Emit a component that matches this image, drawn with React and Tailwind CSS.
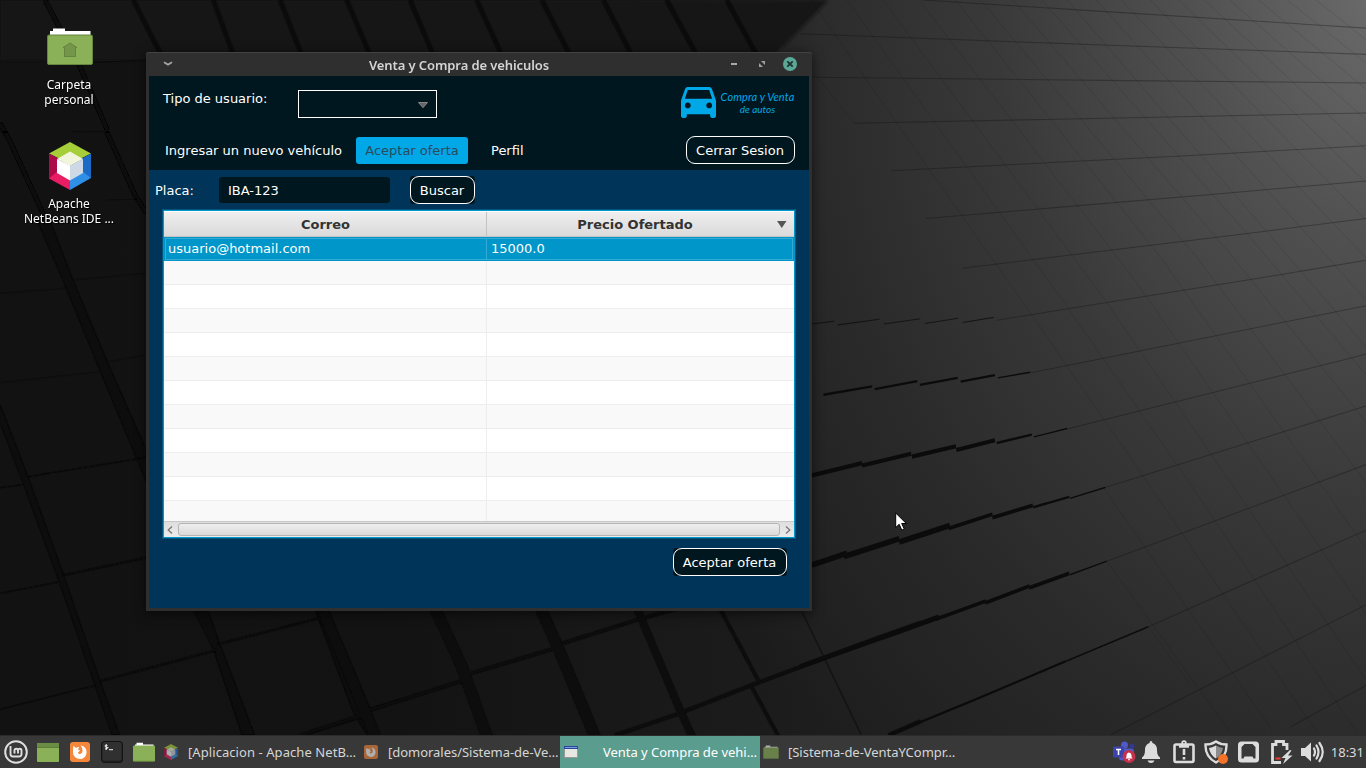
const UI = "font-['Noto_Sans','Open_Sans',sans-serif]";

function Wallpaper() {
  return (
    <svg className="absolute inset-0 h-full w-full" viewBox="0 0 1366 768" preserveAspectRatio="none">
      <defs>
        <radialGradient id="light" gradientUnits="userSpaceOnUse" cx="0" cy="0" r="1" gradientTransform="translate(1400 -30) scale(820 1080)">
          <stop offset="0" stopColor="#6f6f6f" />
          <stop offset=".25" stopColor="#515151" />
          <stop offset=".5" stopColor="#393939" />
          <stop offset=".75" stopColor="#292929" />
          <stop offset="1" stopColor="#1d1d1d" />
        </radialGradient>
        <linearGradient id="shade" x1="0" x2="1" y1="0" y2="0">
          <stop offset="0" stopColor="#121212" />
          <stop offset=".5" stopColor="#131313" />
          <stop offset="1" stopColor="#131313" stopOpacity="0" />
        </linearGradient>
        <filter id="soft"><feGaussianBlur stdDeviation="1.6" /></filter>
      </defs>
      <rect width="1366" height="768" fill="url(#light)" />
      <rect width="820" height="768" fill="url(#shade)" />
      <path d="M0 0H829L770 60H0Z" fill="#151515" filter="url(#soft)" />

      <g transform="scale(.33333)" fill="none" stroke="#070707" filter="url(#soft)">
        <path strokeWidth="15" d="M135 0L240 200L322 390M320 395L405 585L440 640M0 370L28 420L120 620L150 690" />
        <path strokeWidth="15" d="M400 0L460 120L485 165M640 0L700 165M840 0L905 165M1040 0L1110 165M1230 0L1300 165M1430 0L1505 165M1625 0L1710 165M1810 0L1895 165M2000 0L2090 165M2180 0L2270 165" opacity=".5" />
        <path strokeWidth="3" opacity=".4" d="M240 190L440 180M325 395L215 395M0 395H25M320 600L410 598" />
      </g>

      <g transform="translate(0 220) scale(.33333)" filter="url(#soft)">
        <g fill="#070707">
          <path d="M110 0H150L220 180L325 430L440 690V790L300 455L200 210Z" />
          <path d="M0 550L85 770L190 1060L300 1380L360 1545H335L285 1400L178 1090L72 800L0 610Z" />
          <path d="M580 1172H625L660 1270L765 1545H725L640 1290Z" />
          <path d="M945 1172H985L1110 1465L1137 1545H1100L1060 1480Z" />
        </g>
        <g fill="none" stroke="#080808" strokeWidth="6">
          <path d="M190 1065L440 1013M300 1383L650 1290M655 1272L980 1188M910 1545L1095 1488M1110 1468L1200 1440" />
          <path strokeWidth="3" d="M85 770L440 712M0 803L75 793M0 1120L180 1085M0 1468L290 1395" />
          <path strokeWidth="3" opacity=".4" d="M0 220L200 205M0 488L300 455M215 180L440 160M325 425L440 405" />
        </g>
      </g>

      <g transform="translate(200 600) scale(.4592 .33333)" fill="none" stroke="#080808" filter="url(#soft)">
        <path strokeWidth="26" d="M268 33L310 170L382 410M510 20L570 200L625 410M740 20L785 160L860 410" />
        <path strokeWidth="17" d="M950 20L1045 330L1072 410" />
        <path strokeWidth="8" d="M1130 20L1215 240M1201 260L1260 410" />
        <path strokeWidth="11" d="M370 330L575 241M220 405L355 345M585 222L770 146M790 130L950 60L1040 25M905 405L1040 342L1200 256L1480 112L1570 68M1500 405L1570 363" />
        <path strokeWidth="1.5" d="M1310 33L1440 405" />
      </g>

      <g transform="translate(800 0) scale(.361 .4688)" fill="none" stroke="#0b0b0b">
        <g strokeWidth="2.2" opacity=".32">
          <path d="M340 0L750 20L1568 60M0 72L840 96L1568 116M33 165L905 172L1568 177M150 263L985 250L1568 241M253 364L1070 332L1568 311M348 466L1155 414L1568 386M450 572L1240 498L1568 466M545 683L1330 586L1568 555M640 795L1420 675L1568 652M740 915L1510 767L1568 755M845 1040L1568 866M850 1197L1568 991M965 1337L1568 1131M860 1568L1568 1290M1360 1550L1568 1462" />
        </g>
        <g strokeWidth="2" opacity=".12">
          <path d="M33 150L150 263M30 0L270 265L640 670L950 1015L1430 1560M130 0L745 660L1070 1020L1540 1560M230 0L845 640L1568 1450M330 0L930 600L1568 1310M430 0L1000 550L1568 1170M500 0L1100 550L1568 1030M590 0L1190 540L1568 900M670 0L1240 500L1568 800M740 0L1568 740M820 0L1568 640M890 0L1568 550M970 0L1568 470M1050 0L1568 390M1120 0L1568 320M1190 0L1568 255M1270 0L1568 190M1350 0L1568 135M1430 0L1568 85M840 1040L1310 1560M850 1197L1190 1560M965 1337L1080 1460M10 1310L170 1568" />
        </g>
        <path strokeWidth="2.2" opacity=".7" d="M33 691L95 685M105 693L220 681M232 691L333 680M346 690L438 679M450 688L537 677" />
        <path strokeWidth="5" d="M65 842L200 824M207 830L325 813M332 821L437 806M445 814L540 800" />
        <path strokeWidth="3" d="M548 806L638 794M648 932L740 914M748 1063L845 1040M748 1226L850 1197" />
        <path strokeWidth="9" d="M33 1014L172 988M172 993L308 968M310 974L432 952M433 960L540 939" />
        <path strokeWidth="5" d="M545 945L642 927M646 1082L746 1060" />
        <path strokeWidth="12" d="M33 1205L130 1180M122 1187L275 1149M275 1156L415 1121" />
        <path strokeWidth="8" d="M412 1127L533 1097M533 1104L645 1078M376 1321L515 1282M513 1286L636 1250M635 1254L746 1223" />
        <path strokeWidth="11" d="M0 1422L235 1357M228 1360L385 1316" />
        <path strokeWidth="5" d="M245 1568L480 1494L615 1450L735 1411" />
        <path strokeWidth="3" d="M735 1411L965 1337" />
      </g>
    </svg>
  );
}

function NetBeansIcon({ className }) {
  return (
    <svg className={className} viewBox="0 0 42 48">
      <path d="M21 0L42 11.500L21 22L0 11.500Z" fill="#a6ce39" />
      <path d="M0 11.500L12 18V31L0 37Z" fill="#ad0a49" />
      <path d="M42 11.500L30 18V31L42 36Z" fill="#1a6ac6" />
      <path d="M0 36.500L9 29L21 38V48Z" fill="#e91d63" />
      <path d="M42 36L33 29L21 38V48Z" fill="#2f8fe6" />
      <path d="M21 9.500L34 17L21 24L8 17Z" fill="#f0f5dc" />
      <path d="M8 17L21 23.500V38.500L8 31Z" fill="#fff" />
      <path d="M34 17L21 23.500V38.500L34 31Z" fill="#cdd9e5" />
    </svg>
  );
}

function FolderIcon({ className }) {
  return (
    <svg className={className} viewBox="0 0 22 20">
      <path d="M2 5V2.500H3.500V.8H10V2.500H20.500V5Z" fill="#fff" />
      <rect y="3.500" width="22" height="16" rx="1" fill="#8bb158" />
      <path d="M.5 19.300H21.500" stroke="#62803a" strokeWidth=".8" />
    </svg>
  );
}

function FirefoxIcon({ className }) {
  return (
    <svg className={className} viewBox="0 0 20 20">
      <rect width="20" height="20" rx="3" fill="#f5863a" />
      <path d="M3.500 3.800L6 6C7 5.200 8 5 9.200 5L8 7.500L10 8.500C9.500 10 8 9.500 8 11C9 13 12.500 12 12.500 9C12.500 7 12 5 10.500 3.500C14.500 4 17 7 16.500 11C16 15 13 17 10 17C6 17 3 14 3 10.500C3 8 3 6 3.500 3.800Z" fill="#fff" />
    </svg>
  );
}

function DesktopIcon({ children, lines }) {
  return (
    <div className={`flex flex-col items-center text-center text-[12px] leading-[15px] text-white [text-shadow:1px_1px_1px_#000] ${UI}`}>
      {children}
      {lines.map((l) => <span key={l} className="whitespace-nowrap">{l}</span>)}
    </div>
  );
}

function TitleBar() {
  return (
    <div className="flex h-6 shrink-0 items-center rounded-t-[3px] border-t border-[#434343] bg-[#2f2f2f] pb-px pl-[17px] pr-[15px]">
      <svg className="h-[6px] w-[10px]" viewBox="0 0 10 6"><path d="M1 1.200Q3 2.800 5 3.600Q7 2.800 9 1.200" fill="none" stroke="#a8a8a8" strokeWidth="1.700" /></svg>
      <div className={`flex-1 pl-[18px] pt-[2px] text-center text-[13px] font-semibold leading-5 text-[#d4d4d4] ${UI}`}>
        <span className="tracking-[-0.1px]">Venta y Compra de vehiculos</span>
      </div>
      <div className="flex items-center gap-[18px]">
        <svg className="-ml-px h-[14px] w-[14px]" viewBox="0 0 14 14"><path d="M5 7H11" stroke="#a8a8a8" strokeWidth="2" /></svg>
        <svg className="h-[14px] w-[8px]" viewBox="0 0 8 14"><path d="M3 4H7V8ZM1 6V10H5Z" fill="#a0a0a0" /></svg>
        <svg className="-ml-px h-[14px] w-[14px]" viewBox="0 0 14 14">
          <circle cx="7" cy="7" r="7" fill="#5aa897" />
          <path d="M4.300 4.300L9.700 9.700M9.700 4.300L4.300 9.700" stroke="#22332f" strokeWidth="1.900" />
        </svg>
      </div>
    </div>
  );
}

function Logo() {
  return (
    <div className="flex items-center gap-[5px] text-[#00a8e8]">
      <svg className="h-[31px] w-[35px]" viewBox="3 5 18 16" preserveAspectRatio="none" fill="currentColor">
        <path d="M18.920 6.010C18.720 5.420 18.160 5 17.500 5h-11c-.66 0-1.210.42-1.420 1.010L3 12v8c0 .55.45 1 1 1h1c.55 0 1-.45 1-1v-1h12v1c0 .55.45 1 1 1h1c.55 0 1-.45 1-1v-8l-2.080-5.990zM6.500 16c-.83 0-1.500-.67-1.500-1.500S5.670 13 6.500 13s1.500.67 1.500 1.500S7.330 16 6.500 16zm11 0c-.83 0-1.500-.67-1.500-1.500s.67-1.500 1.500-1.500 1.500.67 1.500 1.500-.67 1.500-1.500 1.500zM5 11l1.500-4.500h11L19 11H5z" />
      </svg>
      <div className="w-[74px] whitespace-nowrap text-center font-['Lato',sans-serif] text-[11px] italic leading-[13px]">
        <div className="-ml-px tracking-[0.12px]">Compra y Venta</div>
        <div className="-ml-px text-[10px]">de autos</div>
      </div>
    </div>
  );
}

function OutlineButton({ children, className }) {
  return (
    <div className={`rounded-[3px] bg-[#00171f] ${className}`}>
      <button className="flex h-7 w-full items-center justify-center rounded-[9px] border border-white pr-px pt-px text-white">{children}</button>
    </div>
  );
}

const EMPTY_ROWS = [1, 2, 3, 4, 5, 6, 7, 8, 9, 10];

function OffersTable() {
  return (
    <div className="ml-[14px] flex h-[328px] w-[632px] flex-col border border-[#0096c9] bg-white shadow-[0_0_0_1px_rgba(3,158,211,.3)]">
      <div className="flex h-[26px] shrink-0 border-b border-[#c4c4c4] bg-linear-to-b from-[#f0f0f0] to-[#dadada] pt-px font-bold text-[#333] shadow-[inset_0_1px_0_#fff]">
        <div className="flex w-[323px] items-center justify-center border-r border-[#c3c3c3] pl-px pt-px">Correo</div>
        <div className="flex flex-1 items-center pl-px pr-[8px] pt-px">
          <span className="flex-1 pl-[5px] text-center">Precio Ofertado</span>
          <svg className="-mr-px h-[7px] w-[10px]" viewBox="0 0 10 7"><path d="M0 0H9.500L4.750 7Z" fill="#555" /></svg>
        </div>
      </div>
      <div className="flex h-6 shrink-0 bg-[#0096c9] p-px text-white">
        <div className="flex flex-1 border border-[#33abd4]">
          <div className="flex w-[321px] items-center border-r border-[#33abd4] pb-px pl-[2px]">usuario@hotmail.com</div>
          <div className="flex flex-1 items-center pb-px pl-[4px]">15000.0</div>
        </div>
      </div>
      {EMPTY_ROWS.map((n) => (
        <div key={n} className="flex h-6 shrink-0 border-b border-[#ededed] odd:bg-[#f9f9f9] even:bg-white">
          <div className="w-[323px] border-r border-[#ededed]" />
        </div>
      ))}
      <div className="flex min-h-0 flex-1 bg-[#f9f9f9]"><div className="w-[323px] border-r border-[#ededed]" /></div>
      <div className="flex h-4 shrink-0 items-center gap-1 border-t border-[#c8c8c8] bg-linear-to-b from-[#dedede] to-[#ececec] px-[3px]">
        <svg className="h-2 w-[6px] shrink-0" viewBox="0 0 6 8"><path d="M5 .5L1.200 4L5 7.500" fill="none" stroke="#777" strokeWidth="1.300" /></svg>
        <div className="ml-px h-[13px] flex-1 rounded-[3px] border border-[#b4b4b4] bg-linear-to-b from-[#efefef] to-[#d9d9d9]" />
        <svg className="ml-px h-2 w-[6px] shrink-0" viewBox="0 0 6 8"><path d="M1 .5L4.800 4L1 7.500" fill="none" stroke="#777" strokeWidth="1.300" /></svg>
      </div>
    </div>
  );
}

function AppWindow() {
  return (
    <div className="absolute left-[146px] top-[52px] flex h-[559px] w-[666px] flex-col rounded-t-[3px] bg-[#2f2f2f] shadow-[0_2px_12px_rgba(0,0,0,.6)]">
      <TitleBar />
      <div className="mx-[3px] mb-[3px] flex flex-1 flex-col bg-[#003459] font-['DejaVu_Sans',sans-serif] text-[13px] leading-4 text-white">
        <header className="flex h-[94px] flex-col bg-[#00171f] pl-[14px] pr-[14px] pt-[11px]">
          <div className="flex h-[49px] items-start">
            <span className="w-[135px] pt-[4px]">Tipo de usuario:</span>
            <div className="mt-[3px] flex h-7 w-[139px] items-center justify-end border border-white pr-[8px]">
              <svg className="mt-[2px] h-[6px] w-[10px]" viewBox="0 0 10 6"><path d="M.5 .5H9.500L5 5.700Z" fill="#666" stroke="#999" strokeWidth=".8" /></svg>
            </div>
            <div className="ml-auto"><Logo /></div>
          </div>
          <nav className="flex items-center">
            <span className="w-[193px] pl-[2px] pt-px">Ingresar un nuevo vehículo</span>
            <span className="flex h-[27px] w-[112px] items-center justify-center rounded-[3px] bg-[#00a8e8] pt-[2px] text-[#2b4a5c]">Aceptar oferta</span>
            <span className="ml-[23px] pt-px">Perfil</span>
            <OutlineButton className="ml-auto w-[109px]">Cerrar Sesion</OutlineButton>
          </nav>
        </header>
        <div className="flex h-10 items-center pl-[6px]">
          <span className="w-16 pt-px">Placa:</span>
          <div className="flex h-[26px] w-[171px] items-center rounded-[3px] bg-[#00171f] pl-[9px] pt-px">IBA-123</div>
          <OutlineButton className="ml-5 w-[65px]">Buscar</OutlineButton>
        </div>
        <OffersTable />
        <div className="flex justify-end pr-[22px] pt-[10px]">
          <OutlineButton className="w-[114px]">Aceptar oferta</OutlineButton>
        </div>
      </div>
    </div>
  );
}

function Task({ icon, label, active, wide }) {
  return (
    <div className={`flex h-full w-[200px] shrink-0 items-center whitespace-nowrap pl-[4px] ${active ? "bg-[#5a9c8e] text-white" : "text-[#d6d6d6]"}`}>
      <div className="flex w-[14px] shrink-0 justify-center">{icon}</div>
      <span className={`pt-[2px] ${wide ? "tracking-[0.07px]" : "tracking-[-0.03px]"} ${active ? "ml-[25px]" : "ml-[10px]"}`}>{label}</span>
    </div>
  );
}

function Tray() {
  return (
    <div className="ml-auto flex h-full items-center text-[#dcdcdc]">
      <svg className="mr-[6px] h-[22px] w-[23px]" viewBox="0 0 23 22">
        <circle cx="11.500" cy="4" r="3.500" fill="#5059c9" /><circle cx="19" cy="5" r="2.500" fill="#34388f" />
        <rect x="6" y="7.500" width="15" height="12" rx="3" fill="#5059c9" />
        <rect x="0" y="5.500" width="11" height="11" rx="1" fill="#3d43ad" />
        <path d="M3 8.500H8M5.500 8.500V14" stroke="#fff" strokeWidth="1.500" />
        <circle cx="16" cy="15.500" r="6.500" fill="#c4314b" />
        <path d="M12.500 17.500L13.500 16V14Q14 11.500 16 11.500T18.500 14V16L19.500 17.500ZM15 18.300H17V19.300H15Z" fill="#fff" />
      </svg>
      <svg className="mr-[13px] h-[22px] w-[18px]" viewBox="0 0 18 22" fill="currentColor">
        <path d="M9 0Q10.300 0 10.500 2Q15 3.500 15 9Q15 14.500 18 16.500V18H0V16.500Q3 14.500 3 9Q3 3.500 7.500 2Q7.700 0 9 0ZM5.500 19.500H12.500Q11.500 22 9 22T5.500 19.500Z" />
      </svg>
      <svg className="mr-[9px] h-[24px] w-[22px]" viewBox="0 0 22 24" fill="none" stroke="currentColor">
        <rect x="1.500" y="4.500" width="19" height="17.500" rx="1.500" strokeWidth="2.600" />
        <path d="M6 6H16" strokeWidth="3.500" /><circle cx="11" cy="3" r="1.800" strokeWidth="1.800" />
        <path d="M11 9V15M11 17V19.500" strokeWidth="2.600" />
      </svg>
      <svg className="mr-[10px] h-[24px] w-[24px]" viewBox="0 0 24 24">
        <path d="M12 1.500Q16.500 4.500 22.500 4.500Q23 17 12 22.500Q1 17 1.500 4.500Q7.500 4.500 12 1.500Z" fill="none" stroke="currentColor" strokeWidth="2.400" />
        <path d="M12 5.500Q8 7.500 5 8Q6 15 12 18.500Z" fill="#dcdcdc" /><path d="M12 5.500Q16 7.500 19 8Q18 15 12 18.500Z" fill="#8c8c8c" />
        <circle cx="19" cy="19" r="5" fill="#f37329" />
      </svg>
      <svg className="mr-[12px] h-[22px] w-[21px]" viewBox="0 0 21 22">
        <path fillRule="evenodd" d="M3.500 .5H17.500Q21 .5 21 4V18Q21 21.500 17.500 21.500H3.500Q0 21.500 0 18V4Q0 .5 3.500 .5ZM6.500 3L3.500 6V17.500H5.500L6.500 15.500H14.500L15.500 17.500H17.500V6L14.500 3Z" fill="currentColor" />
      </svg>
      <svg className="mr-[8px] h-[24px] w-[22px]" viewBox="0 0 22 24">
        <path d="M10 22.500H1.500V4.500H5V1.500H12.500V4.500H16V10" fill="none" stroke="currentColor" strokeWidth="2.800" />
        <path d="M4.500 18.500H9.500" stroke="#f03a30" strokeWidth="2" />
        <path d="M19 10L10.500 18H14.500L12 24L21.500 15.500H17L20.500 10.500Z" fill="currentColor" />
      </svg>
      <svg className="mr-[7px] h-[22px] w-[23px]" viewBox="0 0 23 22" fill="none" stroke="currentColor" strokeWidth="2.200" strokeLinecap="round">
        <path d="M0 7H4L10 1.500V20.500L4 15H0Z" fill="currentColor" stroke="none" />
        <path d="M13 7.500Q15 11 13 14.500M15.500 4.500Q19.500 11 15.500 17.500M18.500 2Q25 11 18.500 20" />
      </svg>
      <span className="mr-[2px] pt-[2px]">18:31</span>
    </div>
  );
}

function Taskbar() {
  return (
    <div className={`absolute inset-x-0 bottom-0 flex h-[33px] items-center border-t border-[#2b2b2b] bg-[#383838] text-[13px] ${UI}`}>
      <div className="flex w-[160px] shrink-0 items-center pl-[4px]">
        <svg className="mr-[9px] h-6 w-6" viewBox="0 0 24 24" fill="none" stroke="#dedede">
          <circle cx="12" cy="12" r="10.800" strokeWidth="2" />
          <path d="M6.500 6V14Q6.500 16.500 9 16.500H15Q17.500 16.500 17.500 14V10.500Q17.500 8.800 15.800 8.800T14 10.500V13.500M14 10.500Q14 8.800 12.200 8.800T10.500 10.500V13.500" strokeWidth="1.900" />
        </svg>
        <svg className="mr-[11px] h-[19px] w-[22px]" viewBox="0 0 22 19"><rect width="22" height="19" rx="1" fill="#8bb158" /><path d="M0 0H22V4H0Z" fill="#6b8d43" /><path d="M0 4.400H22" stroke="#4f6c31" strokeWidth=".8" /></svg>
        <FirefoxIcon className="mr-[11px] h-5 w-5" />
        <svg className="mr-[10px] h-[22px] w-[22px]" viewBox="0 0 22 22">
          <rect x=".5" y=".5" width="21" height="21" rx="3" fill="#1e1e1e" stroke="#131313" />
          <rect x="1.500" y="1" width="19" height="18.500" rx="2.500" fill="#303030" />
          <path d="M6.500 4.500Q4 3.500 4 5T6.500 6.500T4 8M5.300 3.200V9M8 8.700H12" fill="none" stroke="#eee" strokeWidth="1" />
        </svg>
        <FolderIcon className="h-5 w-[22px]" />
      </div>
      <Task wide icon={<NetBeansIcon className="h-4 w-[14px] opacity-60" />} label="[Aplicacion - Apache NetB…" />
      <Task icon={<FirefoxIcon className="h-[14px] w-[14px] opacity-60" />} label="[domorales/Sistema-de-Ve…" />
      <Task active icon={
        <svg className="h-3 w-[14px]" viewBox="0 0 14 12"><rect x=".5" y=".5" width="13" height="11" fill="#e8e8e2" stroke="#999" /><path d="M0 0H14V3H0Z" fill="#26479a" /><path d="M1 1.500H13" stroke="#7d9be0" /></svg>
      } label="Venta y Compra de vehi…" />
      <Task icon={<FolderIcon className="h-[14px] w-4 shrink-0 opacity-60" />} label="[Sistema-de-VentaYCompr…" />
      <Tray />
    </div>
  );
}

export default function App() {
  return (
    <div className="relative h-screen w-screen overflow-hidden bg-[#131313]">
      <Wallpaper />
      <div className="absolute left-[8px] top-[28px] flex w-[122px] flex-col gap-[35px]">
        <DesktopIcon lines={["Carpeta", "personal"]}>
          <svg className="mb-[12px] ml-[2px] h-[37px] w-[46px]" viewBox="0 0 46 37">
            <path d="M3 8V3H6V.5H18V3H43.500V8Z" fill="#fff" />
            <rect x=".5" y="7" width="45" height="29.500" rx="1.500" fill="#8bb158" stroke="#66853f" />
            <path d="M23 15L30 19.500H28.500V28.500H17.500V19.500H16Z" fill="#74964a" stroke="#5d7b3a" strokeWidth=".8" />
          </svg>
        </DesktopIcon>
        <DesktopIcon lines={["Apache", "NetBeans IDE ..."]}>
          <NetBeansIcon className="mb-[6px] ml-[2px] h-12 w-[42px]" />
        </DesktopIcon>
      </div>
      <AppWindow />
      <Taskbar />
      <svg className="absolute left-[895px] top-[512px] h-[20px] w-[13px]" viewBox="0 0 13 20">
        <path d="M.7 1V15.500L4.200 12.300L6.800 18.200L9.300 17L6.700 11.500H11.300Z" fill="#fff" stroke="#000" />
      </svg>
    </div>
  );
}
